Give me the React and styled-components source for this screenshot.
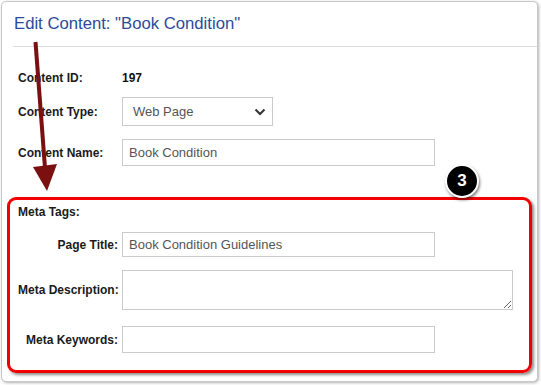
import React from 'react'
import styled, { createGlobalStyle } from 'styled-components'

const GlobalStyle = createGlobalStyle`
  html, body {
    margin: 0;
    padding: 0;
    background: #fff;
    font-family: "Liberation Sans", Arial, sans-serif;
  }
`

const Page = styled.div`
  position: relative;
  width: 541px;
  height: 385px;
  overflow: hidden;
`

const Panel = styled.div`
  margin: 1px;
  width: 535px;
  height: 379px;
  border: 1px solid #c8c8c8;
  border-radius: 5px;
  box-shadow: 1px 1px 3px rgba(0, 0, 0, 0.3);
  background: #fff;
`

const Header = styled.div`
  height: 44px;
  margin-left: 11px;
  padding-left: 1px;
  display: flex;
  align-items: center;
  border-bottom: 1px solid #dcdcdc;
`

const Title = styled.h2`
  margin: 0;
  font-size: 16.7px;
  font-weight: normal;
  line-height: 20px;
  color: #2b4b9c;
`

const Body = styled.div`
  padding: 17px 0 0 16px;
`

const Row = styled.div`
  display: flex;
  align-items: center;
  gap: 4px;
  height: ${p => p.h}px;
  margin-top: ${p => p.mt || 0}px;
`

const Label = styled.label`
  width: 100px;
  flex: none;
  font-size: 12px;
  font-weight: bold;
  color: #1a1a1a;
  text-align: ${p => (p.right ? 'right' : 'left')};
  white-space: nowrap;
`

const Value = styled.span`
  font-size: 12px;
  font-weight: bold;
  color: #111;
`

const Input = styled.input`
  box-sizing: border-box;
  width: ${p => p.w}px;
  height: 100%;
  border: 1px solid #cbcbcb;
  border-radius: 0;
  padding: 0 6px;
  font-family: "Liberation Sans", Arial, sans-serif;
  font-size: 13px;
  color: #555;
  outline: none;
`

const TextArea = styled.textarea`
  box-sizing: border-box;
  width: 391px;
  height: 100%;
  border: 1px solid #cbcbcb;
  padding: 4px 6px;
  font-family: "Liberation Sans", Arial, sans-serif;
  font-size: 13px;
  color: #555;
  outline: none;
`

const Select = styled.div`
  box-sizing: border-box;
  width: 151px;
  height: 100%;
  border: 1px solid #cbcbcb;
  padding: 0 6px 0 10px;
  display: flex;
  align-items: center;
  justify-content: space-between;
  font-size: 13px;
  color: #555;
`

const Highlight = styled.div`
  position: absolute;
  left: 7px;
  top: 197px;
  width: 519px;
  height: 170px;
  border: 3px solid #f20000;
  border-radius: 9px;
  box-shadow: 2px 2px 3px rgba(0, 0, 0, 0.45);
  pointer-events: none;
`

const Badge = styled.div`
  position: absolute;
  left: 445px;
  top: 164px;
  width: 30px;
  height: 30px;
  border: 2px solid #fff;
  border-radius: 50%;
  background: #000;
  box-shadow: 1px 2px 3px rgba(0, 0, 0, 0.5);
  color: #fff;
  font-size: 17px;
  font-weight: bold;
  display: flex;
  align-items: center;
  justify-content: center;
`

const Arrow = styled.svg`
  position: absolute;
  left: 0;
  top: 0;
  pointer-events: none;
`

function Chevron() {
  return (
    <svg width="12" height="8" viewBox="0 0 12 8">
      <path d="M1.5 1.5 L6 6 L10.5 1.5" fill="none" stroke="#333" strokeWidth="2" />
    </svg>
  )
}

export default function App() {
  return (
    <Page>
      <GlobalStyle />
      <Panel>
        <Header>
          <Title>Edit Content: "Book Condition"</Title>
        </Header>
        <Body>
          <Row h={28}>
            <Label>Content ID:</Label>
            <Value>197</Value>
          </Row>
          <Row h={29} mt={5}>
            <Label>Content Type:</Label>
            <Select>
              <span>Web Page</span>
              <Chevron />
            </Select>
          </Row>
          <Row h={27} mt={13}>
            <Label>Content Name:</Label>
            <Input w={313} defaultValue="Book Condition" />
          </Row>
          <Row h={16} mt={38}>
            <Label>Meta Tags:</Label>
          </Row>
          <Row h={25} mt={12}>
            <Label right>Page Title:</Label>
            <Input w={313} defaultValue="Book Condition Guidelines" />
          </Row>
          <Row h={40} mt={13}>
            <Label right>Meta Description:</Label>
            <TextArea />
          </Row>
          <Row h={27} mt={16}>
            <Label right>Meta Keywords:</Label>
            <Input w={313} />
          </Row>
        </Body>
      </Panel>

      <Highlight />
      <Badge>3</Badge>
      <Arrow width="541" height="385">
        <line x1="35.5" y1="42" x2="45" y2="168" stroke="#7a1010" strokeWidth="4" />
        <polygon points="33,167 57,164 47,191" fill="#7a1010" />
      </Arrow>
    </Page>
  )
}
